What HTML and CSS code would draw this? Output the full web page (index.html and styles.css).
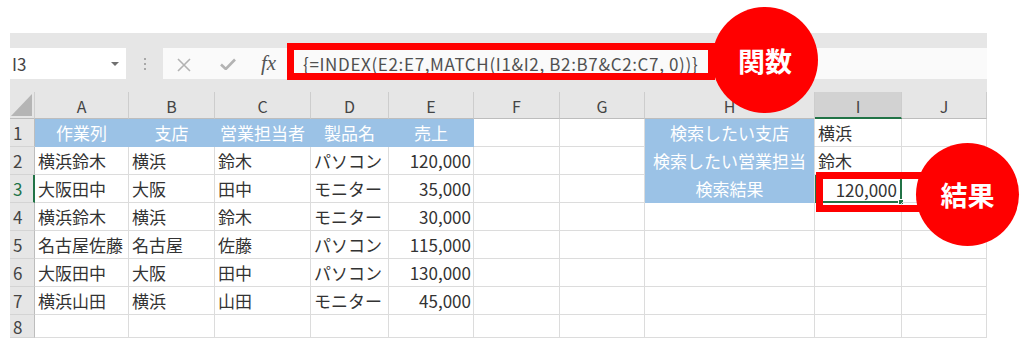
FILE: index.html
```html
<!DOCTYPE html>
<html lang="ja">
<head>
<meta charset="utf-8">
<title>INDEX MATCH 複数条件</title>
<link rel="stylesheet" href="styles.css">
</head>
<body>
<div class="page">
  <div class="sheet">
    <div class="toolbar">
      <div class="namebox">
        <span class="namebox-text">I3</span>
        <span class="namebox-arrow"></span>
      </div>
      <div class="grip"><i></i><i></i><i></i></div>
      <div class="formulabar">
        <div class="fbtns">
          <svg class="ico-cancel" width="14" height="14" viewBox="0 0 14 14"><path d="M1 1L13 13M13 1L1 13" stroke="#b3b3b3" stroke-width="1.6" fill="none"/></svg>
          <svg class="ico-enter" width="16" height="12" viewBox="0 0 16 12"><path d="M1 6.5L5.8 11L15 1.5" stroke="#b3b3b3" stroke-width="2.6" fill="none"/></svg>
          <span class="fx">fx</span>
        </div>
        <div class="formula">{=INDEX(E2:E7,MATCH(I1&amp;I2, B2:B7&amp;C2:C7, 0))}</div>
      </div>
    </div>

    <div class="grid">
      <div class="corner"><span class="corner-tri"></span></div>
      <div class="colhead">A</div>
      <div class="colhead">B</div>
      <div class="colhead">C</div>
      <div class="colhead">D</div>
      <div class="colhead">E</div>
      <div class="colhead">F</div>
      <div class="colhead">G</div>
      <div class="colhead">H</div>
      <div class="colhead active">I</div>
      <div class="colhead">J</div>

      <div class="rowhead">1</div>
      <div class="cell title">作業列</div>
      <div class="cell title">支店</div>
      <div class="cell title">営業担当者</div>
      <div class="cell title">製品名</div>
      <div class="cell title">売上</div>
      <div class="cell"></div>
      <div class="cell"></div>
      <div class="cell title key">検索したい支店</div>
      <div class="cell">横浜</div>
      <div class="cell"></div>

      <div class="rowhead">2</div>
      <div class="cell">横浜鈴木</div>
      <div class="cell">横浜</div>
      <div class="cell">鈴木</div>
      <div class="cell">パソコン</div>
      <div class="cell num">120,000</div>
      <div class="cell"></div>
      <div class="cell"></div>
      <div class="cell title key">検索したい営業担当</div>
      <div class="cell">鈴木</div>
      <div class="cell"></div>

      <div class="rowhead active">3</div>
      <div class="cell">大阪田中</div>
      <div class="cell">大阪</div>
      <div class="cell">田中</div>
      <div class="cell">モニター</div>
      <div class="cell num">35,000</div>
      <div class="cell"></div>
      <div class="cell"></div>
      <div class="cell title key last">検索結果</div>
      <div class="cell num selected">120,000<span class="fill-handle"></span></div>
      <div class="cell"></div>

      <div class="rowhead">4</div>
      <div class="cell">横浜鈴木</div>
      <div class="cell">横浜</div>
      <div class="cell">鈴木</div>
      <div class="cell">モニター</div>
      <div class="cell num">30,000</div>
      <div class="cell"></div>
      <div class="cell"></div>
      <div class="cell"></div>
      <div class="cell"></div>
      <div class="cell"></div>

      <div class="rowhead">5</div>
      <div class="cell">名古屋佐藤</div>
      <div class="cell">名古屋</div>
      <div class="cell">佐藤</div>
      <div class="cell">パソコン</div>
      <div class="cell num">115,000</div>
      <div class="cell"></div>
      <div class="cell"></div>
      <div class="cell"></div>
      <div class="cell"></div>
      <div class="cell"></div>

      <div class="rowhead">6</div>
      <div class="cell">大阪田中</div>
      <div class="cell">大阪</div>
      <div class="cell">田中</div>
      <div class="cell">パソコン</div>
      <div class="cell num">130,000</div>
      <div class="cell"></div>
      <div class="cell"></div>
      <div class="cell"></div>
      <div class="cell"></div>
      <div class="cell"></div>

      <div class="rowhead">7</div>
      <div class="cell">横浜山田</div>
      <div class="cell">横浜</div>
      <div class="cell">山田</div>
      <div class="cell">モニター</div>
      <div class="cell num">45,000</div>
      <div class="cell"></div>
      <div class="cell"></div>
      <div class="cell"></div>
      <div class="cell"></div>
      <div class="cell"></div>

      <div class="rowhead">8</div>
      <div class="cell"></div>
      <div class="cell"></div>
      <div class="cell"></div>
      <div class="cell"></div>
      <div class="cell"></div>
      <div class="cell"></div>
      <div class="cell"></div>
      <div class="cell"></div>
      <div class="cell"></div>
      <div class="cell"></div>
    </div>
  </div>

  <!-- callouts drawn over the sheet -->
  <div class="frame frame-formula"></div>
  <div class="frame frame-result"></div>
  <div class="badge badge-func">関数</div>
  <div class="badge badge-result">結果</div>
</div>
</body>
</html>
```

FILE: styles.css
```css
* {
  box-sizing: border-box;
}

html, body {
  margin: 0;
  padding: 0;
  background: #ffffff;
}

body {
  font-family: "Noto Sans CJK JP", "Noto Sans", sans-serif;
  color: #333333;
}

.page {
  position: relative;
  width: 1024px;
  height: 351px;
  overflow: hidden;
}

.sheet {
  margin: 33px 0 0 10px;
  width: 977px;
}

/* ---- name box + formula bar ---- */
.toolbar {
  height: 59px;
  background: #e6e6e6;
  padding-top: 15px;
  display: flex;
  align-items: flex-start;
}

.namebox {
  width: 116px;
  height: 31px;
  background: #ffffff;
  display: flex;
  align-items: center;
  justify-content: space-between;
  padding: 0 7px 0 2px;
}

.namebox-text {
  font-size: 17px;
  color: #444444;
}

.namebox-arrow {
  width: 0;
  height: 0;
  border-left: 4px solid transparent;
  border-right: 4px solid transparent;
  border-top: 4px solid #707070;
}

.grip {
  width: 37px;
  height: 31px;
  display: flex;
  flex-direction: column;
  align-items: center;
  justify-content: center;
  gap: 3px;
}

.grip i {
  display: block;
  width: 2px;
  height: 2px;
  background: #a8a8a8;
}

.formulabar {
  flex: 1;
  height: 31px;
  background: #fafafa;
  display: flex;
  align-items: center;
}

.fbtns {
  width: 124px;
  display: flex;
  align-items: center;
  padding-left: 14px;
}

.ico-cancel {
  margin-top: 2px;
}

.ico-enter {
  margin-left: 29px;
  margin-top: 1px;
}

.fx {
  margin-left: 25px;
  font-family: "Liberation Serif", "DejaVu Serif", serif;
  font-style: italic;
  font-size: 21px;
  color: #555555;
  line-height: 1;
}

.formula {
  padding-left: 16px;
  font-size: 17px;
  color: #505050;
  white-space: nowrap;
  letter-spacing: 0.65px;
}

/* ---- worksheet grid ---- */
.grid {
  display: grid;
  grid-template-columns: 25px 94px 86px 96px 78px 85px 86px 85px 170px 87px 85px;
  grid-template-rows: 27px repeat(7, 28px) 23px;
}

.corner {
  background: #e6e6e6;
  border-bottom: 1px solid #bdbdbd;
  border-right: 1px solid #cfcfcf;
  position: relative;
}

.corner-tri {
  position: absolute;
  right: 2px;
  bottom: 2px;
  width: 0;
  height: 0;
  border-left: 21px solid transparent;
  border-bottom: 22px solid #b5b5b5;
}

.colhead {
  background: #e6e6e6;
  border-right: 1px solid #cdcdcd;
  border-bottom: 1px solid #bdbdbd;
  display: flex;
  align-items: center;
  justify-content: center;
  font-size: 16px;
  color: #444444;
  padding-top: 2px;
}

.colhead.active {
  background: #d2d2d2;
  border-bottom: 2px solid #217346;
}

.rowhead {
  background: #e6e6e6;
  border-right: 1px solid #bdbdbd;
  border-bottom: 1px solid #d4d4d4;
  display: flex;
  align-items: center;
  padding-left: 3px;
  font-size: 17px;
  color: #444444;
}

.rowhead.active {
  color: #217346;
  border-right: 2px solid #217346;
}

.cell {
  border-right: 1px solid #dcdcdc;
  border-bottom: 1px solid #dcdcdc;
  display: flex;
  align-items: center;
  padding: 0 3px;
  font-size: 17px;
  color: #333333;
  white-space: nowrap;
  overflow: hidden;
  position: relative;
}

.cell.num {
  justify-content: flex-end;
  padding-right: 2px;
}

.cell.title {
  background: #9bc2e6;
  border-color: #9bc2e6;
  color: #ffffff;
  justify-content: center;
}

.cell.key {
  border-right-color: #dcdcdc;
}

.cell.selected {
  border: 2px solid #217346;
  padding-right: 3px;
  overflow: visible;
}

.fill-handle {
  position: absolute;
  right: -4px;
  bottom: -4px;
  width: 6px;
  height: 6px;
  background: #217346;
  border: 1px solid #ffffff;
}

/* ---- red callouts ---- */
.frame {
  position: absolute;
  border: 7px solid #ff0000;
}

.frame-formula {
  left: 287px;
  top: 43px;
  width: 428px;
  height: 37px;
}

.frame-result {
  left: 816px;
  top: 172px;
  width: 120px;
  height: 40px;
}

.badge {
  position: absolute;
  border-radius: 50%;
  background: #ff0000;
  color: #ffffff;
  font-weight: bold;
  font-size: 27px;
  display: flex;
  align-items: center;
  justify-content: center;
  letter-spacing: 0;
}

.badge-func {
  left: 712px;
  top: 7px;
  width: 106px;
  height: 106px;
}

.badge-result {
  left: 916px;
  top: 143px;
  width: 103px;
  height: 103px;
}
```
